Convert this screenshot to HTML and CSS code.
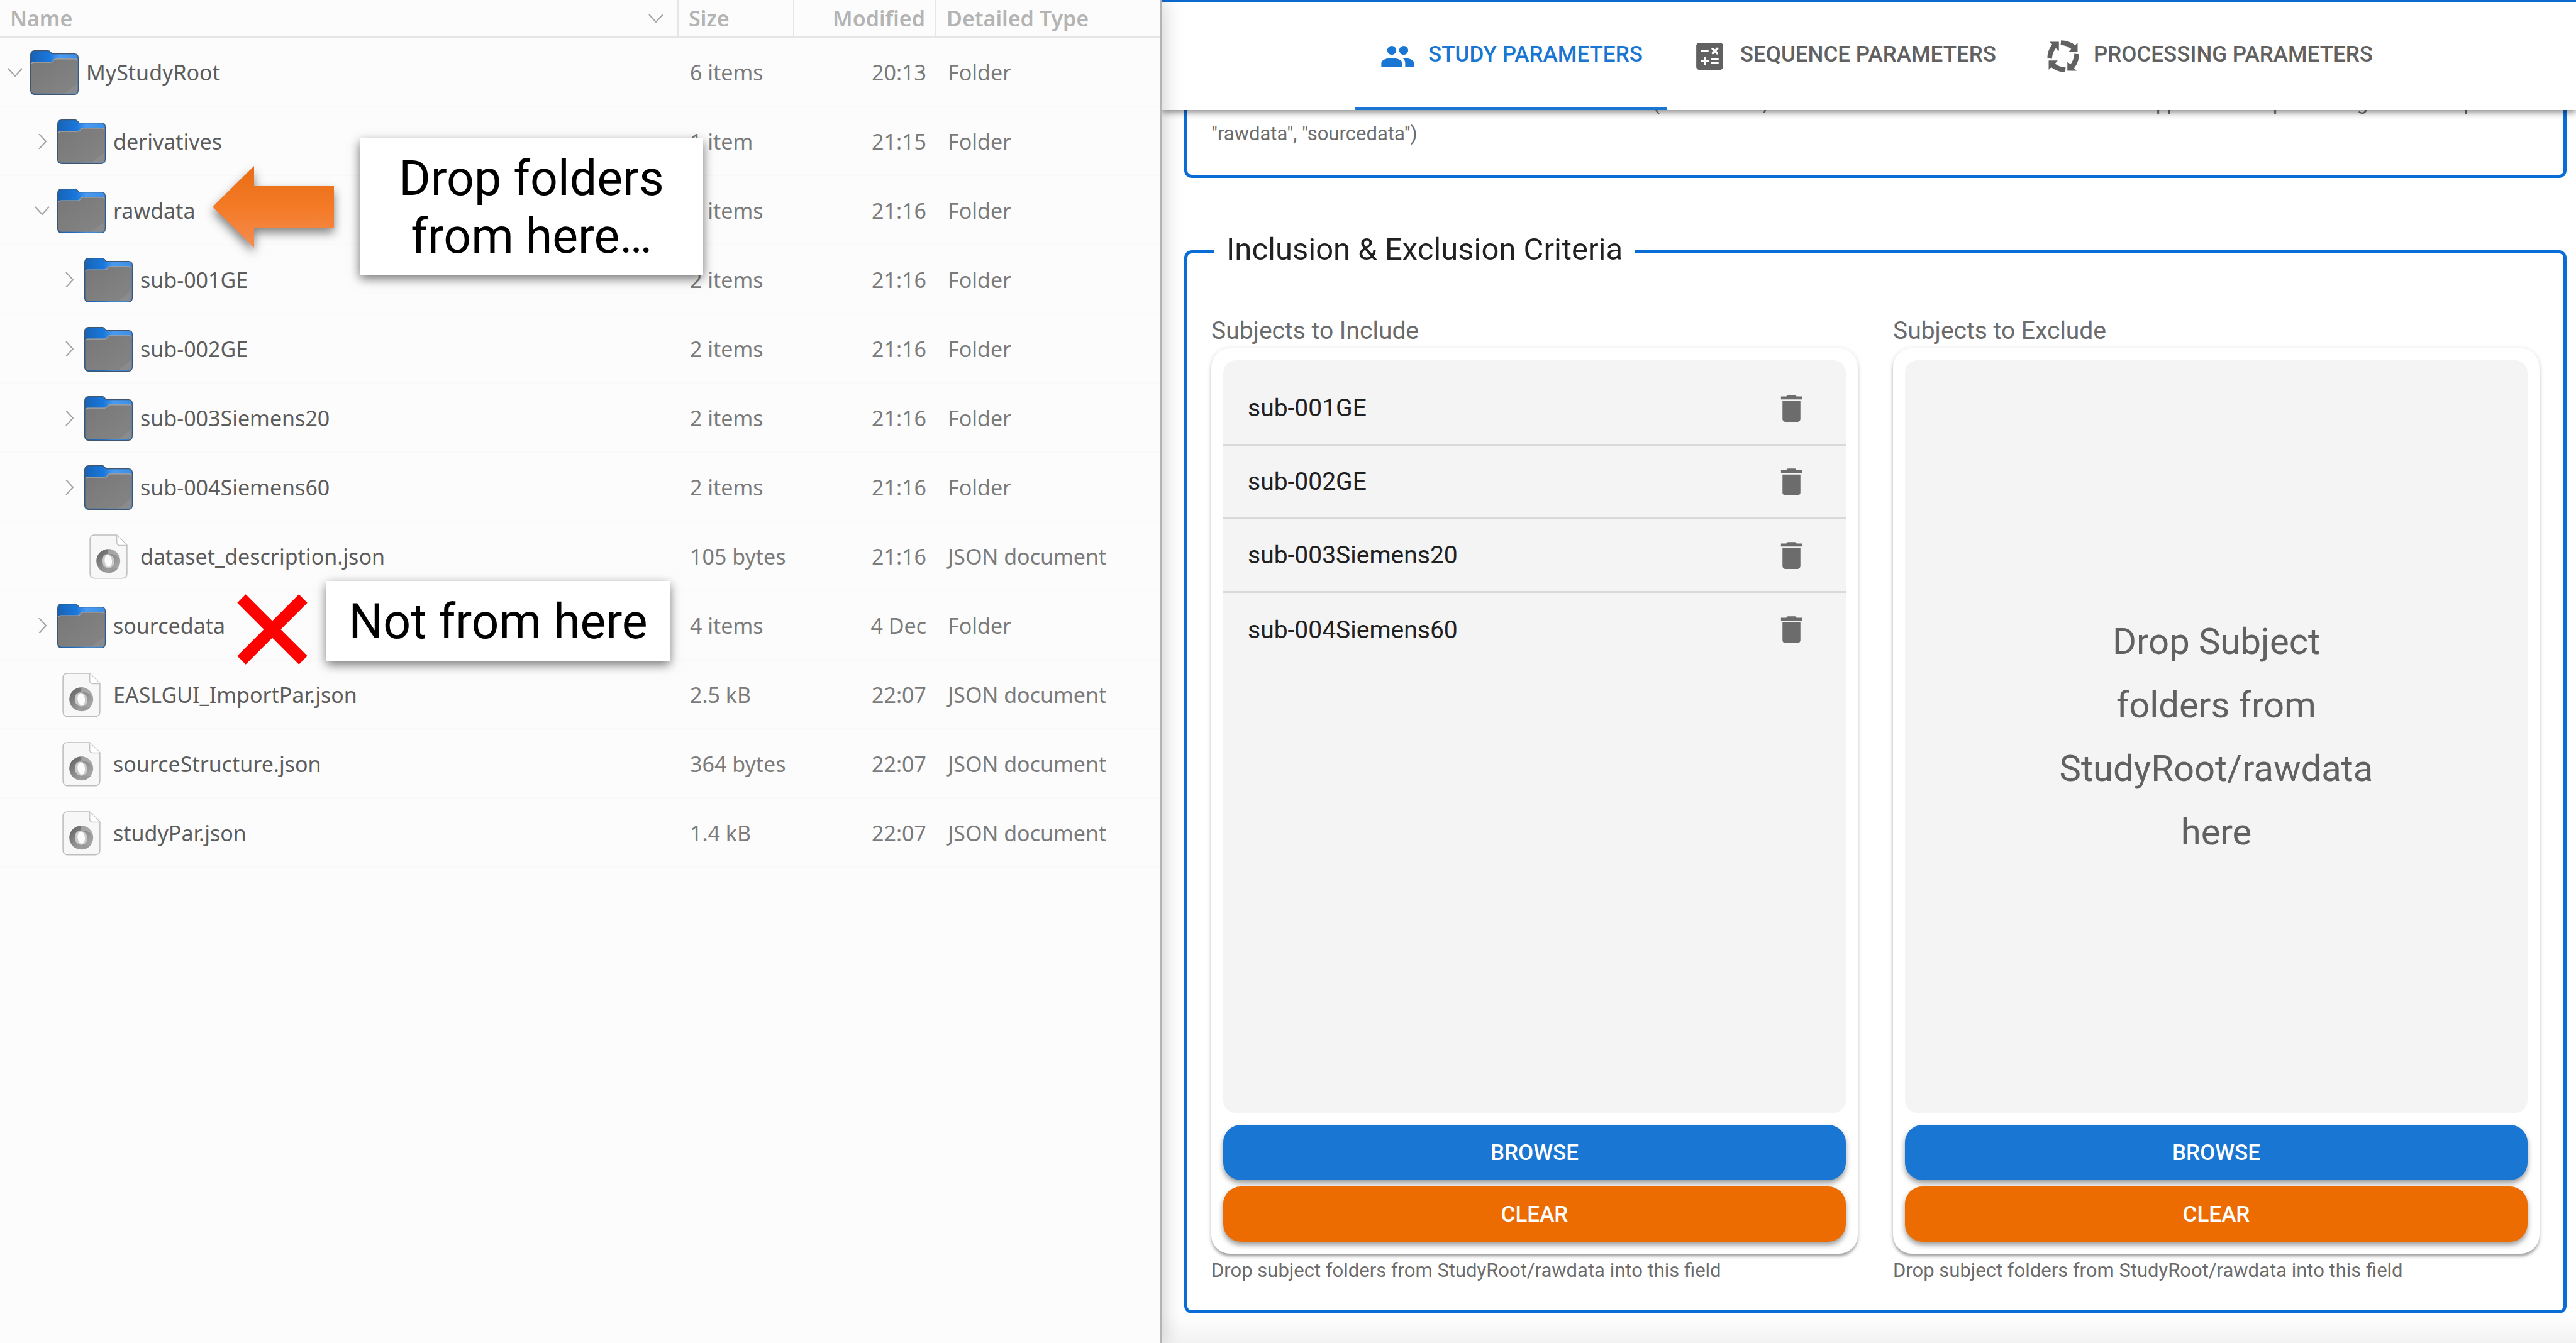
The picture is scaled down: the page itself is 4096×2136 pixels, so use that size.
FILE: index.html
```html
<!DOCTYPE html>
<html lang="en">
<head>
<meta charset="utf-8">
<title>Study Parameters</title>
<link rel="stylesheet" href="styles.css">
</head>
<body>
<svg class="sprite" width="0" height="0" aria-hidden="true">
  <defs>
    <linearGradient id="tab-blue" x1="0" y1="0" x2="1" y2="0">
      <stop offset="0" stop-color="#1763b4"/><stop offset=".4" stop-color="#1a78dc"/><stop offset=".6" stop-color="#4a9af0"/><stop offset="1" stop-color="#3c8ee6"/>
    </linearGradient>
    <linearGradient id="front-gray" x1="0" y1="0" x2="1" y2="1">
      <stop offset="0" stop-color="#777"/><stop offset=".85" stop-color="#838383"/><stop offset=".86" stop-color="#8b8b8b"/><stop offset="1" stop-color="#8b8b8b"/>
    </linearGradient>
    <linearGradient id="ring" x1="0" y1="0" x2="1" y2="1">
      <stop offset="0" stop-color="#5c5c5c"/><stop offset=".5" stop-color="#8e8e8e"/><stop offset="1" stop-color="#b4b4b4"/>
    </linearGradient>
    <linearGradient id="arrow-fill" x1="0" y1="0" x2="0" y2="1">
      <stop offset="0" stop-color="#e86c14"/><stop offset=".5" stop-color="#f47a26"/><stop offset="1" stop-color="#f48c50"/>
    </linearGradient>
    <symbol id="folder" viewBox="0 0 243 224">
      <path d="M2 24Q2 2 22 2H90Q97 2 101 8L110 18H222Q241 18 241 38V200Q241 222 219 222H24Q2 222 2 200Z" fill="url(#tab-blue)" stroke="#41566c" stroke-width="4"/>
      <path d="M5 72Q5 59 18 59H104Q110 59 114 54L119 47Q122 43 128 43H226Q238 43 238 54V198Q238 217 219 217H24Q5 217 5 198Z" fill="url(#front-gray)"/>
      <path d="M6 68Q8 60 18 60H104Q110 60 114 55L119 48Q122 44 128 44H226Q236 44 237 52" fill="none" stroke="#a9a49f" stroke-width="4"/>
    </symbol>
    <symbol id="json" viewBox="0 0 198 232">
      <path d="M26 3H142L195 56V202Q195 228 169 228H29Q3 228 3 202V26Q3 3 26 3Z" fill="#f7f7f7" stroke="#bdbdbd" stroke-width="5"/>
      <path d="M142 4V42Q142 57 157 57H195" fill="#fff" stroke="#c4c4c4" stroke-width="5"/>
      <circle cx="98" cy="138" r="62" fill="url(#ring)"/>
      <path d="M66 150C58 112 84 94 108 106C138 120 138 164 106 176C90 176 72 170 66 150Z" fill="#c9c9c9"/>
      <path d="M98 76A62 62 0 0 1 160 138C152 112 128 96 98 104Z" fill="#b5b5b5" opacity=".7"/>
      <path d="M98 200A62 62 0 0 0 150 172C136 180 120 178 106 172Z" fill="#999"/>
      <ellipse cx="98" cy="138" rx="19" ry="32" transform="rotate(-8 98 138)" fill="#fbfbfb"/>
    </symbol>
    <symbol id="open" viewBox="0 0 24 24"><path d="M1 6L12 18L23 6" fill="none" stroke="#a3a3a3" stroke-width="2"/></symbol>
    <symbol id="closed" viewBox="0 0 24 24"><path d="M7 0L18 12L7 24" fill="none" stroke="#a3a3a3" stroke-width="2"/></symbol>
    <symbol id="people" viewBox="0 0 24 24"><path d="M16 11c1.66 0 2.99-1.34 2.99-3S17.66 5 16 5c-1.66 0-3 1.34-3 3s1.34 3 3 3zm-8 0c1.66 0 2.99-1.34 2.99-3S9.66 5 8 5C6.34 5 5 6.34 5 8s1.34 3 3 3zm0 2c-2.33 0-7 1.17-7 3.5V19h14v-2.5c0-2.33-4.67-3.5-7-3.5zm8 0c-.29 0-.62.02-.97.05 1.16.84 1.97 1.97 1.97 3.45V19h6v-2.5c0-2.33-4.67-3.5-7-3.5z"/></symbol>
    <symbol id="calculate" viewBox="0 0 24 24"><path d="M19 3H5c-1.1 0-2 .9-2 2v14c0 1.1.9 2 2 2h14c1.1 0 2-.9 2-2V5c0-1.1-.9-2-2-2zm-5.97 4.06L14.09 6l1.41 1.41L16.91 6l1.06 1.06-1.41 1.41 1.41 1.41-1.06 1.06-1.41-1.4-1.41 1.41-1.06-1.06 1.41-1.41-1.41-1.42zm-6.78.66h5v1.5h-5v-1.5zM11.5 16h-2v2H8v-2H6v-1.5h2v-2h1.5v2h2V16zm6.5 1.25h-5v-1.5h5v1.5zm0-2.5h-5v-1.5h5v1.5z"/></symbol>
    <symbol id="cycle" viewBox="-93 -93 186 186">
      <path id="cycle-arrow" d="M-82 11L-58 13Q-56 -20 -38 -42L-22 -28V-75H-70L-57 -62Q-82 -30 -82 11Z"/>
      <use href="#cycle-arrow" transform="rotate(90)"/><use href="#cycle-arrow" transform="rotate(180)"/><use href="#cycle-arrow" transform="rotate(270)"/>
    </symbol>
    <symbol id="trash" viewBox="0 0 24 24"><path d="M6 19c0 1.1.9 2 2 2h8c1.1 0 2-.9 2-2V7H6v12zM19 4h-3.5l-1-1h-5l-1 1H5v2h14V4z"/></symbol>
  </defs>
</svg>

<div class="desktop">
  <section class="files" aria-label="Files">
    <table class="tree">
      <colgroup><col class="col-name"><col class="col-size"><col class="col-modified"><col class="col-type"></colgroup>
      <thead>
        <tr>
          <th scope="col"><div class="sort">Name<svg class="chevron"><use href="#open"/></svg></div></th>
          <th scope="col">Size</th><th scope="col" class="num">Modified</th><th scope="col">Detailed Type</th>
        </tr>
      </thead>
      <tbody>
        <tr><td><div class="entry"><button class="toggle" aria-label="Collapse"><svg class="chevron"><use href="#open"/></svg></button><svg class="icon"><use href="#folder"/></svg>MyStudyRoot</div></td><td>6 items</td><td class="num">20:13</td><td>Folder</td></tr>
        <tr><td><div class="entry level-1"><button class="toggle" aria-label="Expand"><svg class="chevron"><use href="#closed"/></svg></button><svg class="icon"><use href="#folder"/></svg>derivatives</div></td><td>1 item</td><td class="num">21:15</td><td>Folder</td></tr>
        <tr><td><div class="entry level-1"><button class="toggle" aria-label="Collapse"><svg class="chevron"><use href="#open"/></svg></button><svg class="icon"><use href="#folder"/></svg>rawdata</div></td><td>6 items</td><td class="num">21:16</td><td>Folder</td></tr>
        <tr><td><div class="entry level-2"><button class="toggle" aria-label="Expand"><svg class="chevron"><use href="#closed"/></svg></button><svg class="icon"><use href="#folder"/></svg>sub-001GE</div></td><td>2 items</td><td class="num">21:16</td><td>Folder</td></tr>
        <tr><td><div class="entry level-2"><button class="toggle" aria-label="Expand"><svg class="chevron"><use href="#closed"/></svg></button><svg class="icon"><use href="#folder"/></svg>sub-002GE</div></td><td>2 items</td><td class="num">21:16</td><td>Folder</td></tr>
        <tr><td><div class="entry level-2"><button class="toggle" aria-label="Expand"><svg class="chevron"><use href="#closed"/></svg></button><svg class="icon"><use href="#folder"/></svg>sub-003Siemens20</div></td><td>2 items</td><td class="num">21:16</td><td>Folder</td></tr>
        <tr><td><div class="entry level-2"><button class="toggle" aria-label="Expand"><svg class="chevron"><use href="#closed"/></svg></button><svg class="icon"><use href="#folder"/></svg>sub-004Siemens60</div></td><td>2 items</td><td class="num">21:16</td><td>Folder</td></tr>
        <tr><td><div class="entry level-2"><span class="toggle"></span><svg class="icon"><use href="#json"/></svg>dataset_description.json</div></td><td>105 bytes</td><td class="num">21:16</td><td>JSON document</td></tr>
        <tr><td><div class="entry level-1"><button class="toggle" aria-label="Expand"><svg class="chevron"><use href="#closed"/></svg></button><svg class="icon"><use href="#folder"/></svg>sourcedata</div></td><td>4 items</td><td class="num">4 Dec</td><td>Folder</td></tr>
        <tr><td><div class="entry level-1"><span class="toggle"></span><svg class="icon"><use href="#json"/></svg>EASLGUI_ImportPar.json</div></td><td>2.5 kB</td><td class="num">22:07</td><td>JSON document</td></tr>
        <tr><td><div class="entry level-1"><span class="toggle"></span><svg class="icon"><use href="#json"/></svg>sourceStructure.json</div></td><td>364 bytes</td><td class="num">22:07</td><td>JSON document</td></tr>
        <tr><td><div class="entry level-1"><span class="toggle"></span><svg class="icon"><use href="#json"/></svg>studyPar.json</div></td><td>1.4 kB</td><td class="num">22:07</td><td>JSON document</td></tr>
      </tbody>
    </table>
    <svg class="arrow" viewBox="0 0 193 130" aria-hidden="true"><path d="M0 65L66 0V32H193V98H66V130Z" fill="url(#arrow-fill)"/></svg>
    <p class="callout callout-do">Drop folders<br>from here…</p>
    <svg class="cross" viewBox="0 0 112 112" aria-hidden="true"><path d="M7 7L105 105M105 7L7 105" stroke="#f00" stroke-width="19"/></svg>
    <p class="callout callout-dont">Not from here</p>
  </section>

  <main class="app">
    <header class="appbar">
      <div class="tabs" role="tablist">
        <button class="tab tab-active" role="tab" aria-selected="true"><svg class="tab-icon"><use href="#people"/></svg>STUDY PARAMETERS</button>
        <button class="tab" role="tab" aria-selected="false"><svg class="tab-icon"><use href="#calculate"/></svg>SEQUENCE PARAMETERS</button>
        <button class="tab" role="tab" aria-selected="false"><svg class="tab-icon"><use href="#cycle"/></svg>PROCESSING PARAMETERS</button>
      </div>
    </header>
    <div class="content">
      <section class="group group-root">
        <p class="hint">This is the root folder of the BIDS dataset that is to (for instance, it is one that should contain all folders that appear in the space along with the top<br>"rawdata", "sourcedata")</p>
      </section>
      <fieldset class="group group-criteria">
        <legend>Inclusion &amp; Exclusion Criteria</legend>
        <div class="columns">
          <section class="field">
            <h2 class="label">Subjects to Include</h2>
            <div class="card">
              <ul class="drop">
                <li class="subject">sub-001GE<button class="remove" aria-label="Remove sub-001GE"><svg class="remove-icon"><use href="#trash"/></svg></button></li>
                <li class="subject">sub-002GE<button class="remove" aria-label="Remove sub-002GE"><svg class="remove-icon"><use href="#trash"/></svg></button></li>
                <li class="subject">sub-003Siemens20<button class="remove" aria-label="Remove sub-003Siemens20"><svg class="remove-icon"><use href="#trash"/></svg></button></li>
                <li class="subject">sub-004Siemens60<button class="remove" aria-label="Remove sub-004Siemens60"><svg class="remove-icon"><use href="#trash"/></svg></button></li>
              </ul>
              <button class="action browse">BROWSE</button>
              <button class="action clear">CLEAR</button>
            </div>
            <p class="helper">Drop subject folders from StudyRoot/rawdata into this field</p>
          </section>
          <section class="field">
            <h2 class="label">Subjects to Exclude</h2>
            <div class="card">
              <div class="drop drop-empty"><p class="placeholder">Drop Subject<br>folders from<br>StudyRoot/rawdata<br>here</p></div>
              <button class="action browse">BROWSE</button>
              <button class="action clear">CLEAR</button>
            </div>
            <p class="helper">Drop subject folders from StudyRoot/rawdata into this field</p>
          </section>
        </div>
      </fieldset>
    </div>
    <div class="fade"></div>
  </main>
</div>
</body>
</html>
```
FILE: styles.css
```css
* { box-sizing: border-box; }
body { margin: 0; background: #fff; font-family: Roboto, "Liberation Sans", sans-serif; color: #212121; }
p, h2, ul { margin: 0; padding: 0; font-weight: 400; }
button { margin: 0; padding: 0; border: 0; background: none; color: inherit; font: inherit; cursor: pointer; }
.sprite { position: absolute; }

.desktop { display: grid; grid-template-columns: 1847fr 2249fr; min-height: 100vh; overflow: hidden; }

/* File manager */
.files { position: relative; z-index: 3; background: #fcfcfc; border-right: 2px solid #b4b4b4; box-shadow: 0 0 32px rgba(0, 0, 0, .24); }
.tree { width: 100%; table-layout: fixed; border-collapse: separate; border-spacing: 0; font-family: "Noto Sans", "Open Sans", sans-serif; font-size: 34px; line-height: 40px; color: #7b7b7b; }
.col-name { width: 1079px; }
.col-size { width: 184px; }
.col-modified { width: 226px; }
.tree th { height: 60px; padding: 0 16px; border-bottom: 3px solid #e6e6e6; border-right: 2px solid #e6e6e6; text-align: left; font-weight: 600; color: #b4b4b4; white-space: nowrap; }
.tree th:last-child { border-right: 0; }
.tree td { height: 110px; padding: 2px 16px 0 18px; border-bottom: 2px solid #f9f9f9; white-space: nowrap; }
.tree td:first-child { padding: 2px 0 0; color: #5c5c5c; }
.tree .num { text-align: right; }
.sort { display: flex; align-items: center; justify-content: space-between; padding-right: 6px; }
.entry { display: flex; align-items: center; gap: 12px; padding-left: 12px; }
.level-1 { padding-left: 55px; }
.level-2 { padding-left: 98px; }
.toggle { display: flex; width: 24px; height: 24px; }
.chevron { width: 24px; height: 24px; }
.icon { width: 77px; height: 71px; }

.arrow { position: absolute; left: 338px; top: 264px; width: 193px; height: 130px; overflow: visible; filter: drop-shadow(0 8px 8px rgba(0, 0, 0, .5)); }
.cross { position: absolute; left: 377px; top: 945px; width: 112px; height: 112px; }
.callout { position: absolute; display: flex; align-items: center; justify-content: center; width: 546px; padding-top: 2px; background: #fff; color: #000; font-size: 77px; line-height: 92px; text-align: center; box-shadow: 0 6px 16px rgba(0, 0, 0, .55); }
.callout-do { left: 572px; top: 220px; height: 217px; }
.callout-dont { left: 519px; top: 924px; height: 127px; }

/* Application */
.app { display: flex; flex-direction: column; min-width: 0; }
.appbar { position: relative; z-index: 2; display: flex; height: 175px; border-top: 3px solid #0a6ad0; background: #fff; box-shadow: 0 4px 10px rgba(0, 0, 0, .45); }
.tabs { flex: 1; display: flex; justify-content: center; padding-left: 24px; }
.tab { display: flex; align-items: center; gap: 20px; padding: 0 39px; border-bottom: 5px solid transparent; color: #616161; font-size: 35px; font-weight: 500; line-height: 40px; white-space: nowrap; }
.tab-active { color: #1976d2; border-bottom-color: #1976d2; }
.tab-icon { width: 57px; height: 57px; margin-top: 6px; fill: currentColor; }

.content { margin: -34px 15px 0 36px; }
.group { margin: 0; border: 5px solid #0a6cd6; border-radius: 12px; }
.group-root { border-top: 0; border-radius: 0 0 12px 12px; padding: 0 38px 41px; }
.hint { font-size: 31px; line-height: 48px; color: #6c6c6c; white-space: nowrap; }
.group-criteria { min-width: 0; margin-top: 84px; padding: 65px 38px 43px; }
.group-criteria legend { margin-left: 5px; padding: 0 19px 6px; font-size: 49px; line-height: 60px; }
.columns { display: grid; grid-template-columns: 1fr 1fr; gap: 56px; }
.label { font-size: 39px; line-height: 56px; color: #6c6c6c; }
.card { display: flex; flex-direction: column; gap: 10px; padding: 19px; border-radius: 30px; background: #fff; box-shadow: 0 5px 5px -1px rgba(0, 0, 0, .34), 0 1px 8px rgba(0, 0, 0, .13); }
.drop { min-height: 1197px; margin-bottom: 9px; padding-top: 19px; border-radius: 20px; background: #f4f4f4; list-style: none; }
.subject { display: flex; align-items: center; justify-content: space-between; height: 117px; padding: 0 58px 0 39px; border-bottom: 3px solid #d9d9d9; font-size: 39px; line-height: 56px; }
.subject:last-child { border-bottom: 0; }
.remove { display: flex; color: #6c6c6c; }
.remove-icon { width: 57px; height: 57px; fill: currentColor; }
.drop-empty { display: flex; align-items: center; justify-content: center; padding-top: 0; }
.placeholder { font-size: 58px; line-height: 101px; color: #616161; text-align: center; }
.action { height: 88px; border-radius: 28px; color: #fff; font-size: 35px; font-weight: 500; box-shadow: 0 5px 8px rgba(0, 0, 0, .4); }
.browse { background: #1976d2; }
.clear { background: #ed6c02; }
.helper { margin-top: 7px; font-size: 31px; line-height: 40px; color: #6c6c6c; }
.fade { flex: 1; background: linear-gradient(#fff, #f2f2f2); }
```
